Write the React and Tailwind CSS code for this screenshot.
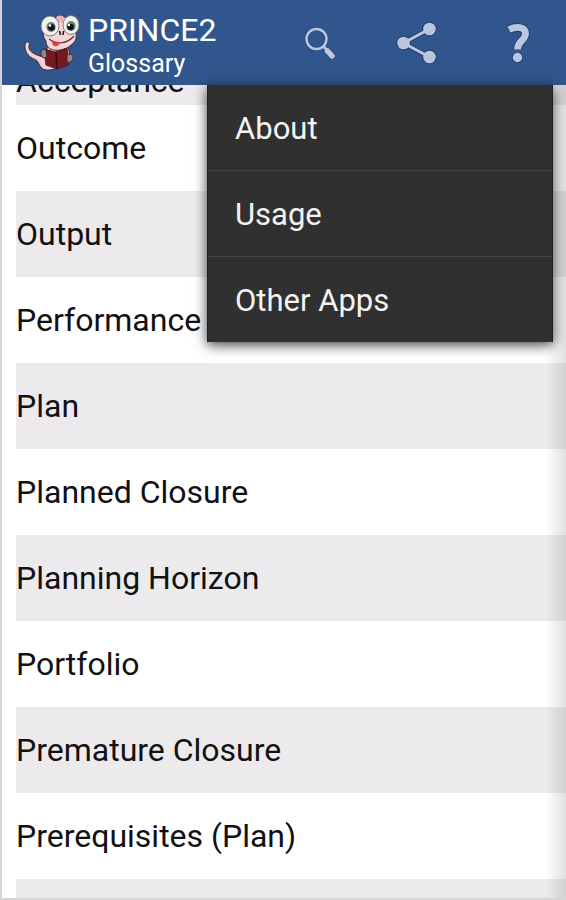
import React from 'react';

const TERMS = [
  'Outcome',
  'Output',
  'Performance Targets',
  'Plan',
  'Planned Closure',
  'Planning Horizon',
  'Portfolio',
  'Premature Closure',
  'Prerequisites (Plan)',
];

const MENU_ITEMS = ['About', 'Usage', 'Other Apps'];

function Mascot() {
  return (
    <svg viewBox="0 0 56 56" className="h-14 w-14 shrink-0" aria-hidden="true">
      <g stroke="#3b2430" strokeWidth="0.9" strokeLinejoin="round">
        <path
          d="M5 27C1.500 26 0 30 1.500 35C3 40 7 43 12 45C15 47 15 52 20 54.500C26 56 31 54 35 52L35 44L23 43C20 43 19 42 16 41C10 39 6 37 5 33C4.500 31 6 29 5 27Z"
          fill="#f6cfd2"
        />
        <path d="M21 40L24 30H44L46 42Z" fill="#e9b9bd" />
        <path
          d="M19 16C19 22 21 24 22 26C22 31 25 34 30 35C36 36 43 34 47 30C51 27 53 24 52 18C50 9 44 4 42 3C39 0 34 0 32 3C25 4 20 9 19 16Z"
          fill="#f8d5d6"
        />
        <ellipse cx="36" cy="4" rx="4" ry="3.500" fill="#f3aeb2" stroke="none" />
        <path d="M20 34L31 37L43 33L45 50L33 54L22 50Z" fill="#76191f" />
        <path d="M32 37L33 54" fill="none" stroke="#300a10" strokeWidth="1.500" />
        <path d="M19 34C16 36 16 41 20 43L23 42L22 35Z" fill="#9b8584" />
        <path d="M43 40C46 38 50 40 49 44C48 47 45 48 43 47Z" fill="#9b8584" />
      </g>
      <g stroke="#6f7478" strokeWidth="0.9">
        <ellipse cx="26" cy="11" rx="9" ry="10" fill="#f0f2ec" />
        <ellipse cx="47" cy="10" rx="8" ry="9.500" fill="#f0f2ec" />
      </g>
      <ellipse cx="27" cy="12" rx="4.600" ry="5" fill="#6d7d80" />
      <ellipse cx="47" cy="11" rx="4.600" ry="5" fill="#6d7d80" />
      <circle cx="27.500" cy="12.500" r="3.300" fill="#10131a" />
      <circle cx="46.500" cy="12" r="3.300" fill="#10131a" />
      <circle cx="26" cy="10.500" r="1.200" fill="#fff" />
      <circle cx="45" cy="10" r="1.200" fill="#fff" />
      <path d="M35.500 16L36.500 20M39.500 16L39 20" stroke="#2a1a20" strokeWidth="1.600" />
      <path d="M25 24C33 30 43 29 50 21" fill="none" stroke="#54313a" strokeWidth="1.200" />
      <path d="M28 26.500C28 30 30 32 33 31C35 30 36 29 35 27Z" fill="#dc3d48" />
    </svg>
  );
}

function SearchIcon() {
  return (
    <svg viewBox="0 0 36 36" className="h-9 w-9" aria-hidden="true">
      <g fill="none" stroke="#2a4b7c" strokeLinecap="round">
        <circle cx="14.500" cy="14" r="10" strokeWidth="3.600" />
        <path d="M24.500 25L30 31" strokeWidth="7" />
      </g>
      <g fill="none" stroke="#bcc8e2" strokeLinecap="round">
        <circle cx="14.500" cy="14" r="10" strokeWidth="2.400" />
        <path d="M21.500 21.500L25 25" strokeWidth="2.800" />
        <path d="M25.500 26L30 31" strokeWidth="5.500" />
      </g>
    </svg>
  );
}

function ShareIcon() {
  return (
    <svg viewBox="0 0 44 44" className="h-11 w-11" aria-hidden="true">
      <g stroke="#23406b" fill="#23406b">
        <path d="M35.500 8L9.500 22L35.500 36" fill="none" strokeWidth="5" />
        <circle cx="35.500" cy="8" r="7" />
        <circle cx="9.500" cy="22" r="7" />
        <circle cx="35.500" cy="36" r="7" />
      </g>
      <g fill="#bac5e0">
        <path d="M35.500 8L9.500 22L35.500 36" fill="none" stroke="#bac5e0" strokeWidth="3" />
        <circle cx="35.500" cy="8" r="6.300" />
        <circle cx="9.500" cy="22" r="6.300" />
        <circle cx="35.500" cy="36" r="6.300" />
      </g>
    </svg>
  );
}

function HelpIcon() {
  return (
    <svg viewBox="0 0 28 44" className="h-11 w-7" aria-hidden="true">
      <path
        d="M5 8.500C11.500 5.500 21.500 5 21.500 12.500C21.500 20 13.500 19 13.500 29"
        fill="none"
        stroke="#23406b"
        strokeWidth="8.800"
      />
      <circle cx="13.500" cy="36.500" r="5.600" fill="#23406b" />
      <path
        d="M5 8.500C11.500 5.500 21.500 5 21.500 12.500C21.500 20 13.500 19 13.500 28.500"
        fill="none"
        stroke="#bac5e0"
        strokeWidth="6.800"
      />
      <circle cx="13.500" cy="36.500" r="4.700" fill="#bac5e0" />
    </svg>
  );
}

function OverflowMenu() {
  return (
    <ul className="absolute top-full right-[13px] z-20 w-[346px] divide-y divide-[#454545] border-x border-[#202020] bg-[#303030] shadow-[0_3px_12px_rgba(0,0,0,0.75)]">
      {MENU_ITEMS.map((item) => (
        <li key={item}>
          <button
            type="button"
            className="flex h-[85px] w-full items-center px-[27px] pt-0.5 text-left text-[31px] leading-9 text-[#f3f3f3]"
          >
            {item}
          </button>
        </li>
      ))}
    </ul>
  );
}

export default function App() {
  return (
    <div className="flex h-screen flex-col overflow-hidden border-b-2 border-l-2 border-[#d6d4d6] bg-white font-[Roboto,sans-serif]">
      <header className="relative z-10 flex h-[85px] shrink-0 items-center bg-[#30568d] pr-[34px] pl-[22px]">
        <Mascot />
        <div className="flex-1 pt-1.5 pl-2 text-white">
          <h1 className="text-[32px] leading-9">PRINCE2</h1>
          <p className="text-[25px] leading-8">Glossary</p>
        </div>
        <nav className="flex items-center">
          <button type="button" aria-label="Search" className="mr-14">
            <SearchIcon />
          </button>
          <button type="button" aria-label="Share" className="mr-[66px]">
            <ShareIcon />
          </button>
          <button type="button" aria-label="Help">
            <HelpIcon />
          </button>
        </nav>
        <OverflowMenu />
      </header>

      <main className="relative min-h-0 flex-1 overflow-hidden pl-[14px]">
        <ul className="text-[32px] leading-10 text-[#111]">
          {/* scrolled partly under the header */}
          <li className="flex h-5 items-end overflow-hidden bg-[#eceaed] pb-1">Acceptance</li>
          {TERMS.map((term) => (
            <li key={term} className="flex h-[86px] items-center whitespace-nowrap odd:bg-[#eceaed]">
              {term}
            </li>
          ))}
          <li className="h-[86px] bg-[#eceaed]" />
        </ul>
        <div className="pointer-events-none absolute inset-y-0 right-0 w-5 bg-linear-to-r from-transparent to-black/12" />
      </main>
    </div>
  );
}
